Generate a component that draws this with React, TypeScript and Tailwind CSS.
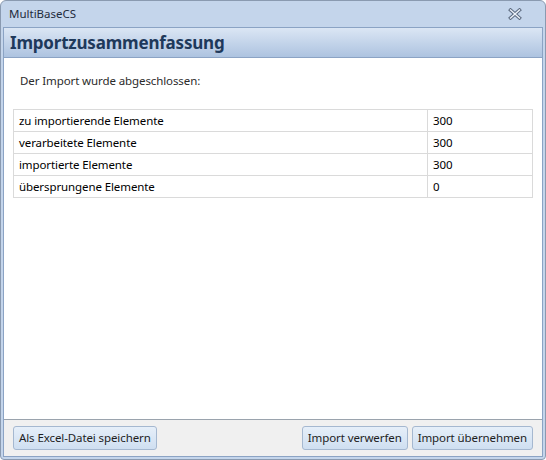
import React from "react";

const rows = [
  { label: "zu importierende Elemente", value: "300" },
  { label: "verarbeitete Elemente", value: "300" },
  { label: "importierte Elemente", value: "300" },
  { label: "übersprungene Elemente", value: "0" },
];

function CloseIcon() {
  return (
    <svg width="14" height="12" viewBox="0 0 14 12">
      <path d="M2.5 2 L11.5 10 M11.5 2 L2.5 10" stroke="#5c6b80" strokeWidth="3.4" strokeLinecap="square" />
      <path d="M2.5 2 L11.5 10 M11.5 2 L2.5 10" stroke="#eef3fa" strokeWidth="1.4" strokeLinecap="square" />
    </svg>
  );
}

function WinButton({ children }: { children: React.ReactNode }) {
  return (
    <button
      type="button"
      className="h-[24px] rounded-[3px] border border-[#a5b8d0] bg-gradient-to-b from-[#e6eff9] to-[#cfdff1] px-[5px] text-[11.5px] tracking-[-0.1px] text-[#1e1e1e]"
    >
      {children}
    </button>
  );
}

export default function App() {
  return (
    <div
      className="flex h-[460px] w-[546px] flex-col rounded-t-[6px] rounded-b-[4px] border border-[#8a9ab0] bg-[#c4d5eb]"
      style={{ fontFamily: '"Noto Sans", "Open Sans", sans-serif' }}
    >
      <div className="flex h-[26px] shrink-0 items-center justify-between pl-[8px] pr-[23px] text-[11.5px] text-[#1e2b3c]">
        <span>MultiBaseCS</span>
        <CloseIcon />
      </div>
      <div className="mx-[2px] mb-[2px] flex flex-1 flex-col border border-[#8ba3c4] bg-white">
        <div className="flex h-[30px] shrink-0 items-center border-b border-[#8ba3c4] bg-gradient-to-b from-[#dbe6f4] to-[#adc3e0] pl-[6px] text-[17px] font-bold tracking-[-0.2px] text-[#1e395b]">
          Importzusammenfassung
        </div>
        <div className="flex-1 px-[9px]">
          <p className="mt-[14px] pl-[7px] text-[11.5px] tracking-[-0.1px] text-[#2b2b2b]">
            Der Import wurde abgeschlossen:
          </p>
          <table className="mt-[20px] w-full border-collapse text-[11.5px] tracking-[-0.1px] text-black">
            <tbody>
              {rows.map((row) => (
                <tr key={row.label} className="h-[22px]">
                  <td className="border border-[#dadada] pl-[5px]">{row.label}</td>
                  <td className="w-[105px] border border-[#dadada] pl-[5px]">{row.value}</td>
                </tr>
              ))}
            </tbody>
          </table>
        </div>
        <div className="flex h-[37px] shrink-0 items-center border-t border-[#9aa3ad] bg-[#f0f0f0] px-[9px]">
          <WinButton>Als Excel-Datei speichern</WinButton>
          <div className="flex-1" />
          <div className="flex gap-[4px]">
            <WinButton>Import verwerfen</WinButton>
            <WinButton>Import übernehmen</WinButton>
          </div>
        </div>
      </div>
    </div>
  );
}
